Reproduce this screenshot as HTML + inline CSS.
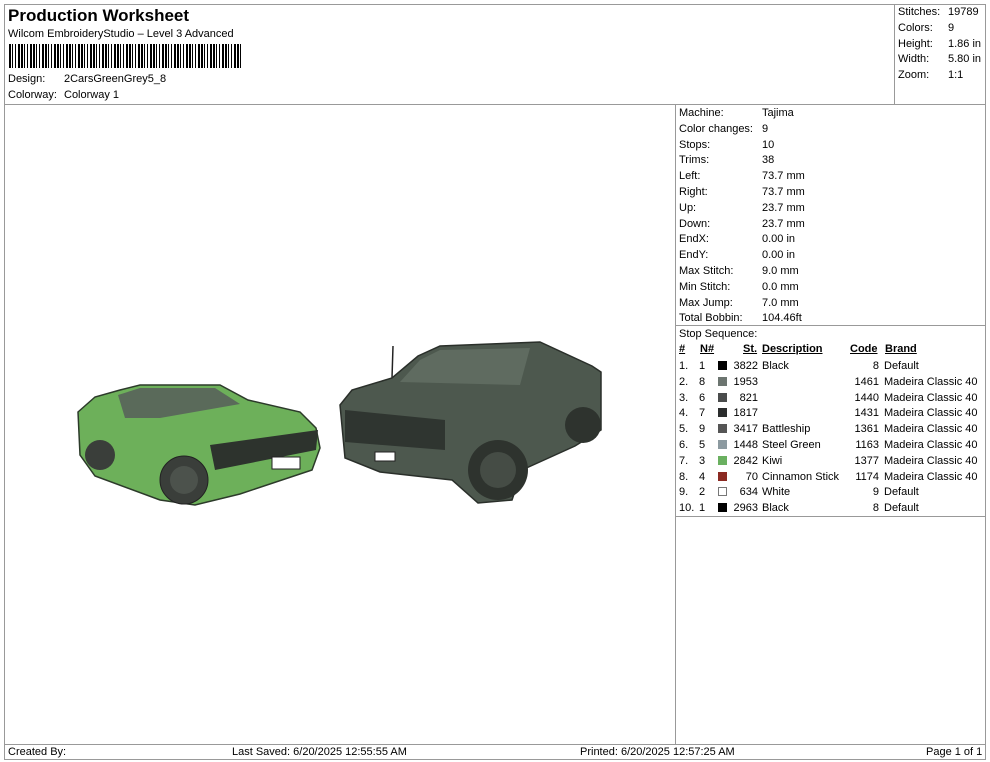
<!DOCTYPE html>
<html><head><meta charset="utf-8"><style>
body{margin:0;width:990px;height:762px;background:#fff;font-family:"Liberation Sans",Arial,sans-serif;font-size:11px;color:#000;position:relative;overflow:hidden}
.a{position:absolute;white-space:nowrap}
.ln{position:absolute;background:#999}
.sw{display:inline-block;width:9px;height:9px;vertical-align:-1px}
.u{text-decoration:underline;font-weight:bold}
</style></head><body>
<div class="ln" style="left:4px;top:4px;width:982px;height:1px"></div>
<div class="ln" style="left:4px;top:759px;width:982px;height:1px"></div>
<div class="ln" style="left:4px;top:4px;width:1px;height:756px"></div>
<div class="ln" style="left:985px;top:4px;width:1px;height:756px"></div>
<div class="ln" style="left:4px;top:104px;width:982px;height:1px"></div>
<div class="ln" style="left:894px;top:4px;width:1px;height:100px"></div>
<div class="ln" style="left:675px;top:104px;width:1px;height:641px"></div>
<div class="ln" style="left:4px;top:744px;width:982px;height:1px"></div>
<div class="ln" style="left:675px;top:325px;width:311px;height:1px"></div>
<div class="ln" style="left:675px;top:516px;width:311px;height:1px"></div>

<div class="a" style="left:8px;top:6px;font-size:17px;font-weight:bold">Production Worksheet</div>
<div class="a" style="left:8px;top:28px">Wilcom EmbroideryStudio – Level 3 Advanced</div>
<div class="a" style="left:9px;top:44px;width:234px;height:24px;background:repeating-linear-gradient(90deg,#000 0 2px,#fff 2px 3px,#000 3px 4px,#fff 4px 6px,#000 6px 7px,#fff 7px 9px,#000 9px 11px,#fff 11px 12px)"></div>
<div class="a" style="left:8px;top:73px">Design:</div><div class="a" style="left:64px;top:73px">2CarsGreenGrey5_8</div>
<div class="a" style="left:8px;top:89px">Colorway:</div><div class="a" style="left:64px;top:89px">Colorway 1</div>

<div class="a" style="left:898px;top:5px;line-height:15.8px">Stitches:<br>Colors:<br>Height:<br>Width:<br>Zoom:</div>
<div class="a" style="left:948px;top:5px;line-height:15.8px">19789<br>9<br>1.86 in<br>5.80 in<br>1:1</div>

<div class="a" style="left:679px;top:106px;line-height:15.8px">Machine:<br>Color changes:<br>Stops:<br>Trims:<br>Left:<br>Right:<br>Up:<br>Down:<br>EndX:<br>EndY:<br>Max Stitch:<br>Min Stitch:<br>Max Jump:<br>Total Bobbin:<br>Stop Sequence:</div>
<div class="a" style="left:762px;top:106px;line-height:15.8px">Tajima<br>9<br>10<br>38<br>73.7 mm<br>73.7 mm<br>23.7 mm<br>23.7 mm<br>0.00 in<br>0.00 in<br>9.0 mm<br>0.0 mm<br>7.0 mm<br>104.46ft</div>

<span class="a u" style="left:679px;top:343px">#</span><span class="a u" style="left:700px;top:343px">N#</span><span class="a u" style="left:743px;top:343px">St.</span><span class="a u" style="left:762px;top:343px">Description</span><span class="a u" style="left:850px;top:343px">Code</span><span class="a u" style="left:885px;top:343px">Brand</span>
<div class="a" style="left:679px;top:359px;line-height:15.8px">1.<br>2.<br>3.<br>4.<br>5.<br>6.<br>7.<br>8.<br>9.<br>10.</div>
<div class="a" style="left:699px;top:359px;line-height:15.8px">1<br>8<br>6<br>7<br>9<br>5<br>3<br>4<br>2<br>1</div>
<div class="a" style="left:718px;top:359px;line-height:15.8px">
<span class="sw" style="background:#000"></span><br><span class="sw" style="background:#6c7570"></span><br><span class="sw" style="background:#4a4c4c"></span><br><span class="sw" style="background:#2b2d2d"></span><br><span class="sw" style="background:#555"></span><br><span class="sw" style="background:#8c9aa0"></span><br><span class="sw" style="background:#6ab060"></span><br><span class="sw" style="background:#8b2a22"></span><br><span class="sw" style="border:1px solid #777;width:7px;height:7px"></span><br><span class="sw" style="background:#000"></span></div>
<div class="a" style="left:728px;top:359px;width:30px;text-align:right;line-height:15.8px">3822<br>1953<br>821<br>1817<br>3417<br>1448<br>2842<br>70<br>634<br>2963</div>
<div class="a" style="left:762px;top:359px;line-height:15.8px">Black<br>&nbsp;<br>&nbsp;<br>&nbsp;<br>Battleship<br>Steel Green<br>Kiwi<br>Cinnamon Stick<br>White<br>Black</div>
<div class="a" style="left:840px;top:359px;width:39px;text-align:right;line-height:15.8px">8<br>1461<br>1440<br>1431<br>1361<br>1163<br>1377<br>1174<br>9<br>8</div>
<div class="a" style="left:884px;top:359px;line-height:15.8px">Default<br>Madeira Classic 40<br>Madeira Classic 40<br>Madeira Classic 40<br>Madeira Classic 40<br>Madeira Classic 40<br>Madeira Classic 40<br>Madeira Classic 40<br>Default<br>Default</div>

<svg class="a" style="left:0;top:0" width="676" height="744">
<polygon points="78,412 95,397 120,390 140,385 220,385 248,400 300,412 316,428 320,448 312,470 240,494 195,505 160,500 95,476 80,455" fill="#6db05a" stroke="#2c3a2a" stroke-width="1.5"/>
<polygon points="118,395 140,388 215,388 240,404 160,418 125,418" fill="#5a6a5a"/>
<polygon points="210,445 318,430 316,450 215,470" fill="#2d332d"/>
<rect x="272" y="457" width="28" height="12" fill="#fff" stroke="#222"/>
<circle cx="100" cy="455" r="15" fill="#3a3e3a"/><circle cx="184" cy="480" r="24" fill="#3a3e3a" stroke="#222"/><circle cx="184" cy="480" r="14" fill="#4c524c"/>
<line x1="393" y1="346" x2="392" y2="378" stroke="#222" stroke-width="1.5"/>
<polygon points="340,405 352,390 392,378 418,356 440,346 540,342 592,366 601,372 601,430 575,446 522,470 512,500 478,503 452,480 380,472 345,458" fill="#4d584e" stroke="#2a2f2a" stroke-width="1.5"/>
<polygon points="420,360 440,350 530,348 520,385 400,382" fill="#5f6b60"/>
<polygon points="345,410 445,420 445,450 345,442" fill="#2f3530"/>
<rect x="375" y="452" width="20" height="9" fill="#fff" stroke="#222"/>
<circle cx="498" cy="470" r="30" fill="#2e332e"/><circle cx="498" cy="470" r="18" fill="#454c45"/>
<circle cx="583" cy="425" r="18" fill="#2e332e"/>
</svg>

<div class="a" style="left:8px;top:746px">Created By:</div>
<div class="a" style="left:232px;top:746px">Last Saved: 6/20/2025 12:55:55 AM</div>
<div class="a" style="left:580px;top:746px">Printed: 6/20/2025 12:57:25 AM</div>
<div class="a" style="left:926px;top:746px">Page 1 of 1</div>
</body></html>
